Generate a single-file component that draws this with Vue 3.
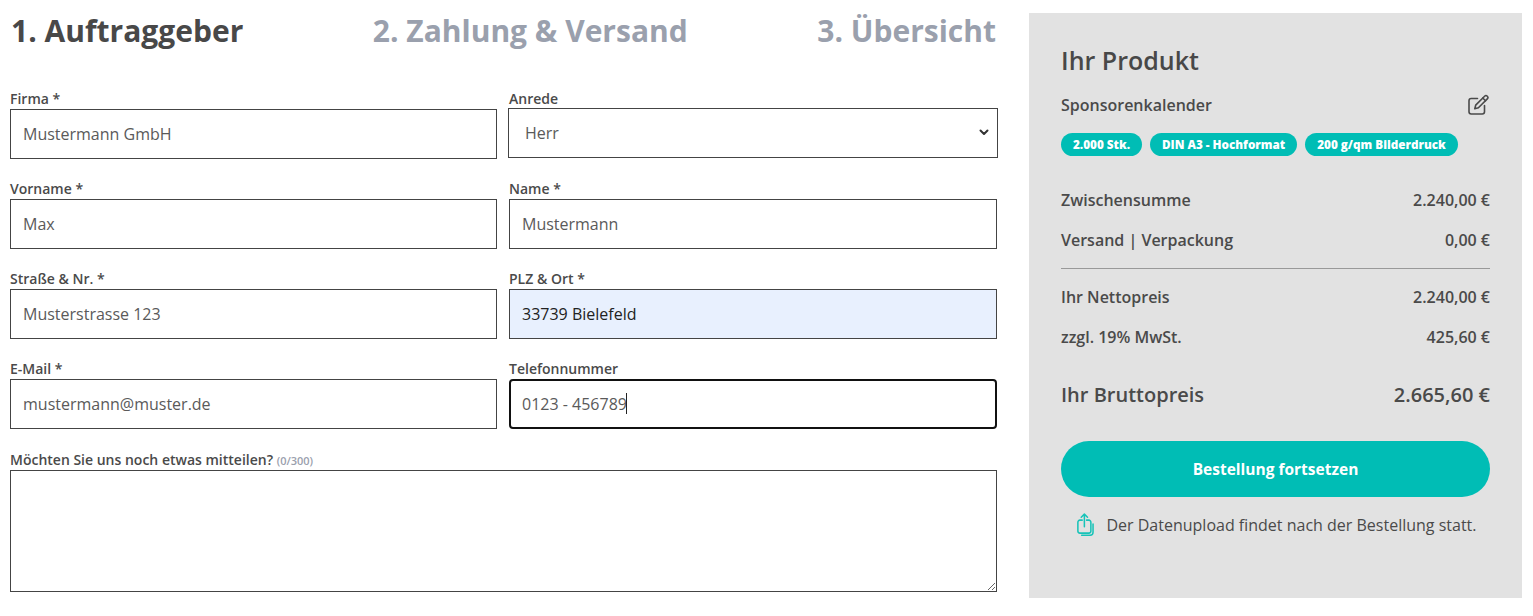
<script setup>
const chips = ['2.000 Stk.', 'DIN A3 - Hochformat', '200 g/qm Bilderdruck']
</script>

<template>
  <div class="page">
    <main class="form-col">
      <nav class="steps">
        <span class="step active">1. Auftraggeber</span>
        <span class="step">2. Zahlung &amp; Versand</span>
        <span class="step">3. Übersicht</span>
      </nav>
      <div class="grid">
        <label class="field">
          <span class="lab">Firma *</span>
          <input class="inp" value="Mustermann GmbH" readonly />
        </label>
        <label class="field">
          <span class="lab">Anrede</span>
          <span class="sel-wrap">
            <select class="inp sel"><option>Herr</option><option>Frau</option></select>
            <svg class="chev" width="10" height="7" viewBox="0 0 10 7" fill="none" stroke="#333" stroke-width="2" stroke-linecap="round" stroke-linejoin="round"><path d="M1.5 1.5 5 5l3.5-3.5" /></svg>
          </span>
        </label>
        <label class="field">
          <span class="lab">Vorname *</span>
          <input class="inp" value="Max" readonly />
        </label>
        <label class="field">
          <span class="lab">Name *</span>
          <input class="inp" value="Mustermann" readonly />
        </label>
        <label class="field">
          <span class="lab">Straße &amp; Nr. *</span>
          <input class="inp" value="Musterstrasse 123" readonly />
        </label>
        <label class="field">
          <span class="lab">PLZ &amp; Ort *</span>
          <input class="inp auto" value="33739 Bielefeld" readonly />
        </label>
        <label class="field">
          <span class="lab">E-Mail *</span>
          <input class="inp" value="mustermann@muster.de" readonly />
        </label>
        <label class="field">
          <span class="lab">Telefonnummer</span>
          <span class="focus-wrap">
            <input class="inp focus" value="0123 - 456789" readonly />
            <i class="caret"></i>
          </span>
        </label>
      </div>
      <label class="field note">
        <span class="lab">Möchten Sie uns noch etwas mitteilen? <small>(0/300)</small></span>
        <textarea class="area"></textarea>
      </label>
    </main>

    <aside class="panel">
      <h2>Ihr Produkt</h2>
      <div class="prod">
        <span>Sponsorenkalender</span>
        <svg width="22" height="22" viewBox="0 0 22 22" fill="none" stroke="#4a4a4a" stroke-width="1.6" stroke-linecap="round" stroke-linejoin="round">
          <path d="M10.5 4.5H4.2A2.2 2.2 0 0 0 2 6.7v11.1A2.2 2.2 0 0 0 4.2 20h11.1a2.2 2.2 0 0 0 2.2-2.2V11.5" />
          <path d="M17.6 2.2a1.9 1.9 0 0 1 2.7 2.7l-8.9 8.9-3.6.9.9-3.6z" />
          <path d="M15.8 4l2.7 2.7" />
        </svg>
      </div>
      <div class="chips">
        <span v-for="c in chips" :key="c" class="chip">{{ c }}</span>
      </div>
      <div class="rows first">
        <div class="row"><span>Zwischensumme</span><span>2.240,00 €</span></div>
        <div class="row"><span>Versand | Verpackung</span><span>0,00 €</span></div>
      </div>
      <hr />
      <div class="rows">
        <div class="row"><span>Ihr Nettopreis</span><span>2.240,00 €</span></div>
        <div class="row"><span>zzgl. 19% MwSt.</span><span>425,60 €</span></div>
      </div>
      <div class="row total"><span>Ihr Bruttopreis</span><span>2.665,60 €</span></div>
      <button class="cta">Bestellung fortsetzen</button>
      <div class="hint">
        <svg width="22" height="26" viewBox="0 0 20 24" fill="none" stroke="#17c3b8" stroke-width="1.4" stroke-linecap="round" stroke-linejoin="round">
          <path d="M6.5 7.5H4.4A1.9 1.9 0 0 0 2.5 9.4v8.2a1.9 1.9 0 0 0 1.9 1.9h8.2a1.9 1.9 0 0 0 1.9-1.9V9.4a1.9 1.9 0 0 0-1.9-1.9h-2.1" />
          <path d="M8.5 13.5V2M5.6 4.8 8.5 2l2.9 2.8" />
          <path d="M16.5 11v7.8a2.7 2.7 0 0 1-2.7 2.7H6" />
        </svg>
        <span>Der Datenupload findet nach der Bestellung statt.</span>
      </div>
    </aside>
  </div>
</template>

<style scoped>
.page {
  display: flex;
  align-items: flex-start;
  width: 1533px;
  height: 616px;
  overflow: hidden;
  background: #fff;
  font-family: "Open Sans", "Liberation Sans", sans-serif;
  color: #444;
  box-sizing: border-box;
  padding: 12px 11px 0 10px;
}
.form-col {
  width: 987px;
  flex: none;
}
.steps {
  display: flex;
  justify-content: space-between;
  height: 77px;
  padding: 0 1px;
  font-size: 30px;
  font-weight: 700;
  line-height: 38px;
  color: #9aa0ad;
}
.step.active { color: #484848; }
.grid {
  display: grid;
  grid-template-columns: 487px 488px;
  column-gap: 12px;
  row-gap: 20px;
}
.field { display: block; }
.lab {
  display: block;
  height: 20px;
  font-size: 14px;
  font-weight: 600;
  line-height: 19px;
  color: #4a4a4a;
}
.inp {
  display: block;
  width: 100%;
  height: 50px;
  box-sizing: border-box;
  border: 1px solid #444;
  border-radius: 0;
  background: #fff;
  padding: 0 12px;
  font: 400 16px "Open Sans", "Liberation Sans", sans-serif;
  color: #5a5a5a;
  outline: none;
}
.sel-wrap { display: block; position: relative; }
.sel {
  width: 490px;
  margin: -1px 0 0 -1px;
  padding-left: 16px;
  appearance: none;
}
.chev {
  position: absolute;
  right: 8px;
  top: 21px;
  pointer-events: none;
}
.auto {
  background: #e8f0fe;
  color: #222;
}
.focus-wrap { display: block; position: relative; }
.focus {
  border: 2px solid #111;
  border-radius: 4px;
  padding-left: 11px;
}
.caret {
  position: absolute;
  left: 117px;
  top: 14px;
  width: 1px;
  height: 21px;
  background: #222;
}
.note { margin-top: 21px; }
.note small {
  font-size: 11px;
  font-weight: 600;
  color: #9aa0ad;
}
.area {
  display: block;
  width: 100%;
  height: 122px;
  box-sizing: border-box;
  border: 1px solid #444;
  border-radius: 0;
  background: #fff;
  padding: 12px;
  outline: none;
  resize: vertical;
}
.panel {
  flex: none;
  width: 493px;
  height: 585px;
  margin: 1px 0 0 32px;
  box-sizing: border-box;
  padding: 31px 32px 0;
  background: #e2e2e2;
}
h2 {
  margin: 0;
  font-size: 25px;
  font-weight: 600;
  line-height: 33px;
  color: #484848;
}
.prod {
  display: flex;
  justify-content: space-between;
  align-items: center;
  margin-top: 16px;
  height: 24px;
  font-size: 16px;
  font-weight: 600;
  color: #4a4a4a;
}
.prod svg { margin-right: 1px; }
.chips {
  display: flex;
  gap: 8px;
  margin-top: 16px;
}
.chip {
  height: 23px;
  line-height: 23px;
  padding: 0 12px;
  border-radius: 12px;
  background: #00bdb5;
  color: #fff;
  font-size: 11.7px;
  font-weight: 800;
  white-space: nowrap;
}
.rows { display: flex; flex-direction: column; gap: 18px; }
.rows.first { margin-top: 33px; }
.row {
  display: flex;
  justify-content: space-between;
  font-size: 16px;
  font-weight: 600;
  line-height: 22px;
  color: #4a4a4a;
}
hr {
  border: 0;
  height: 1px;
  background: #999;
  margin: 17px 0 17px;
}
.total {
  margin-top: 33px;
  font-size: 20px;
  font-weight: 600;
  line-height: 28px;
}
.cta {
  display: block;
  width: 100%;
  height: 56px;
  margin-top: 32px;
  border: 0;
  border-radius: 28px;
  background: #00bdb5;
  color: #fff;
  font: 700 15.5px "Open Sans", "Liberation Sans", sans-serif;
}
.hint {
  display: flex;
  align-items: center;
  justify-content: center;
  gap: 9px;
  margin-top: 15px;
  padding-left: 1px;
  font-size: 16px;
  line-height: 24px;
  color: #4a4a4a;
}
</style>

<style>
html, body { margin: 0; background: #fff; }
</style>
